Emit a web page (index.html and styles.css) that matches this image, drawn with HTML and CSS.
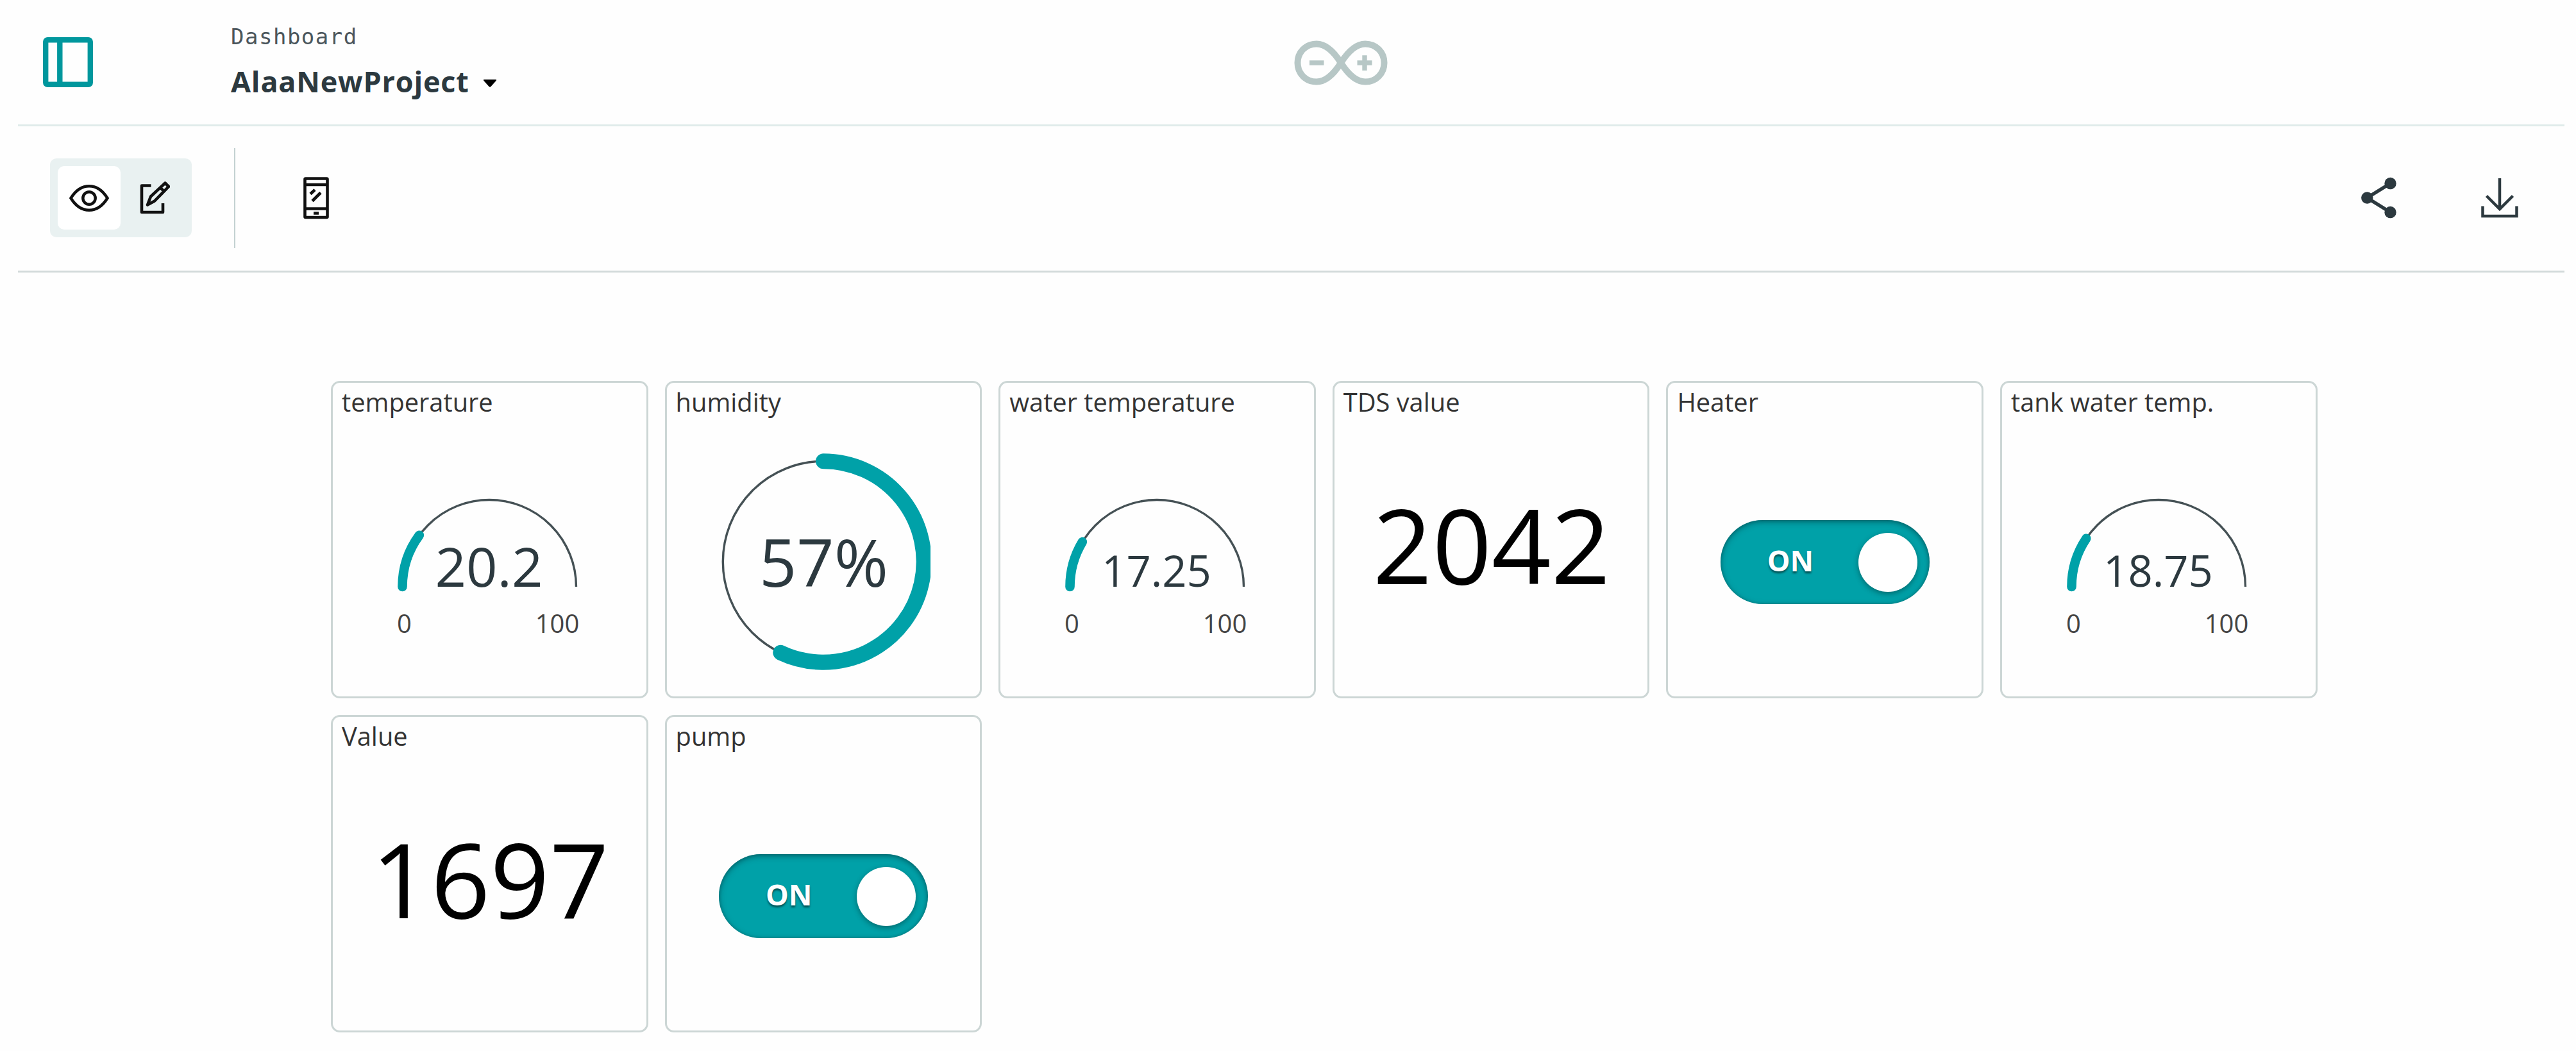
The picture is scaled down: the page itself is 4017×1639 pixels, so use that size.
FILE: index.html
```html
<!DOCTYPE html>
<html lang="en">
<head>
<meta charset="utf-8">
<title>AlaaNewProject - Dashboard</title>
<link rel="stylesheet" href="styles.css">
</head>
<body>
<div class="page">
  <header class="header">
    <svg class="sidebar-icon" viewBox="0 0 78 78"><rect x="4.2" y="4.2" width="69.6" height="69.6" rx="3"/><path d="M26.3 4V74"/></svg>
    <div class="heading">
      <div class="crumb">Dashboard</div>
      <div class="project"><h1 class="name">AlaaNewProject</h1><svg class="caret" viewBox="0 0 22 14"><path d="M2 1H20Q22 1 20.5 3L12.500 12Q11 13.500 9.500 12L1.500 3Q0 1 2 1Z"/></svg></div>
    </div>
    <svg class="logo" viewBox="0 0 148 72">
      <path d="M74 36C62 17 49 6.500 36 6.500C19 6.500 6.500 19.500 6.500 36S19 65.500 36 65.500C49 65.500 62 55 74 36C86 17 99 6.500 112 6.500C129 6.500 141.500 19.500 141.500 36S129 65.500 112 65.500C99 65.500 86 55 74 36Z"/>
      <path class="sign" d="M25 36H47.500M99.500 36H122.500M111 24.300V48"/>
    </svg>
  </header>

  <div class="toolbar">
    <div class="modes">
      <div class="mode active"><svg class="eye" viewBox="0 0 62 42"><path d="M2.500 21C18-4 44-4 59.500 21C44 46 18 46 2.500 21Z"/><circle cx="31" cy="21" r="9.700"/></svg></div>
      <div class="mode"><svg class="edit" viewBox="0 0 48 51"><path d="M18.500 6.500H4V48H37V34"/><path d="M13 36.500L18 23.500L40.500 2.500L46 8L24 30.500ZM33 9.500L39 15.500"/></svg></div>
    </div>
    <div class="divider"></div>
    <svg class="phone" viewBox="0 0 40 66"><rect x="2.500" y="2.500" width="35" height="60.500" rx="1"/><path d="M2.500 12H37.500M2.500 49.500H37.500M11 26.500L18 20M14 37.500L27 24.500M16 56.500H24"/></svg>
    <div class="actions">
      <svg class="share" viewBox="0 0 56 66"><path d="M45.500 10L9.300 32.500L45.500 55"/><circle cx="45.500" cy="10" r="9.200"/><circle cx="9.300" cy="32.500" r="9.200"/><circle cx="45.500" cy="55" r="9.200"/></svg>
      <svg class="download" viewBox="0 0 58 66"><path d="M29 2V50M8.500 29.500L29 50L49.500 29.500M2.500 45.500V61H55.500V45.500"/></svg>
    </div>
  </div>

  <main class="grid">
    <section class="card">
      <h2 class="title">temperature</h2>
      <svg class="gauge" viewBox="0 0 488 435">
        <path class="track" d="M108.500 264A135.500 135.500 0 0 1 379.500 264"/>
        <path class="fill" d="M108.500 264A135.500 135.500 0 0 1 134.900 183.700"/>
        <text class="reading" x="243.500" y="263.500">20.2</text>
        <text class="bound" x="111.500" y="336">0</text><text class="bound" x="350" y="336">100</text>
      </svg>
    </section>
    <section class="card">
      <h2 class="title">humidity</h2>
      <svg class="gauge percent" viewBox="0 0 488 435">
        <defs><clipPath id="ring-bounds"><rect x="77" y="0" width="334" height="435"/></clipPath></defs>
        <g clip-path="url(#ring-bounds)">
          <circle class="track" cx="244" cy="225" r="156.700"/>
          <path class="fill" d="M244 68.300A156.700 156.700 0 1 1 177.300 366.800"/>
        </g>
        <text class="reading" x="244.500" y="263.500">57%</text>
      </svg>
    </section>
    <section class="card">
      <h2 class="title">water temperature</h2>
      <svg class="gauge long" viewBox="0 0 488 435">
        <path class="track" d="M108.500 264A135.500 135.500 0 0 1 379.500 264"/>
        <path class="fill" d="M108.500 264A135.500 135.500 0 0 1 127.900 194.100"/>
        <text class="reading" x="243.500" y="263.500">17.25</text>
        <text class="bound" x="111.500" y="336">0</text><text class="bound" x="350" y="336">100</text>
      </svg>
    </section>
    <section class="card">
      <h2 class="title">TDS value</h2>
      <div class="value">2042</div>
    </section>
    <section class="card">
      <h2 class="title">Heater</h2>
      <div class="toggle"><span class="state">ON</span><span class="knob"></span></div>
    </section>
    <section class="card">
      <h2 class="title">tank water temp.</h2>
      <svg class="gauge long" viewBox="0 0 488 435">
        <path class="track" d="M108.500 264A135.500 135.500 0 0 1 379.500 264"/>
        <path class="fill" d="M108.500 264A135.500 135.500 0 0 1 131.300 188.700"/>
        <text class="reading" x="243.500" y="263.500">18.75</text>
        <text class="bound" x="111.500" y="336">0</text><text class="bound" x="350" y="336">100</text>
      </svg>
    </section>
    <section class="card">
      <h2 class="title">Value</h2>
      <div class="value">1697</div>
    </section>
    <section class="card">
      <h2 class="title">pump</h2>
      <div class="toggle"><span class="state">ON</span><span class="knob"></span></div>
    </section>
  </main>
</div>
</body>
</html>
```
FILE: styles.css
```css
* { box-sizing: border-box; }
body {
  margin: 0;
  background: #fefefe;
  color: #2c393f;
  font-family: "Open Sans", "Noto Sans", sans-serif;
}
svg { display: block; flex: none; fill: none; }
.page { padding: 0 18px 0 28px; }

/* header */
.header {
  display: flex;
  align-items: flex-start;
  height: 197px;
  border-bottom: 3px solid #e0ebea;
}
.sidebar-icon { width: 78px; height: 78px; margin: 58px 0 0 39px; stroke: #00979d; stroke-width: 8.4; }
.heading { width: 1600px; margin: 33px 0 0 215px; }
.crumb {
  font: 34px/48px "DejaVu Sans Mono", monospace;
  letter-spacing: 1.5px;
  color: #4b565c;
}
.project { display: flex; align-items: center; margin-top: 16px; }
.name { margin: 0; font-size: 45px; line-height: 60px; font-weight: 700; letter-spacing: .8px; }
.caret { width: 22px; height: 14px; margin: 5px 0 0 21px; fill: #000; }
.logo { width: 148px; height: 72px; margin: 62px 0 0 57px; stroke: #b7c7c6; stroke-width: 10; }
.logo .sign { stroke-width: 7.4; }

/* toolbar */
.toolbar {
  display: flex;
  align-items: center;
  height: 228px;
  padding: 0 72px 2px 50px;
  border-bottom: 3px solid #d2dada;
}
.modes {
  display: flex;
  gap: 11px;
  width: 221px;
  height: 123px;
  padding: 12px;
  border-radius: 10px;
  background: #e9f1f1;
}
.mode { display: flex; align-items: center; justify-content: center; width: 98px; border-radius: 10px; }
.mode.active { background: #fff; }
.mode:not(.active) { width: 84px; }
.eye { width: 62px; height: 42px; stroke: #111; stroke-width: 4.5; }
.edit { width: 48px; height: 51px; stroke: #111; stroke-width: 4.6; stroke-linejoin: round; }
.divider { width: 2px; height: 156px; margin-left: 66px; background: #c3d1d1; }
.phone { width: 40px; height: 66px; margin-left: 106px; stroke: #111; stroke-width: 4.6; }
.actions { display: flex; gap: 131px; margin-left: auto; stroke: #2c393f; }
.share { width: 56px; height: 66px; stroke-width: 5.500; }
.share circle { fill: #2c393f; stroke: none; }
.download { width: 58px; height: 66px; stroke-width: 4.500; }

/* widgets */
.grid {
  display: grid;
  grid-template-columns: repeat(6, 494.6px);
  grid-auto-rows: 495px;
  gap: 26px;
  margin: 169px 0 0 488px;
}
.card { display: flex; flex-direction: column; align-items: center; padding-top: 6px; border: 3px solid #ccd6d5; border-radius: 14px; }
.title {
  align-self: stretch;
  margin: 0;
  padding-left: 14px;
  font-size: 39.8px;
  line-height: 48px;
  font-weight: 400;
  color: #333;
}
.gauge { width: 488px; height: 435px; }
.track { stroke: #455155; stroke-width: 3.4; }
.fill { stroke: #00a1a8; stroke-width: 14.6; stroke-linecap: round; }
.percent .fill { stroke-width: 24; }
.reading { font-size: 85px; text-anchor: middle; fill: #2c393f; }
.long .reading { font-size: 67px; }
.percent .reading { font-size: 102px; }
.bound { font-size: 40px; text-anchor: middle; fill: #444; }
.value { margin: 97px 0 0 2px; font-size: 162px; line-height: 200px; color: #000; }
.toggle {
  display: flex;
  align-items: center;
  justify-content: space-between;
  width: 326px;
  height: 131px;
  margin-top: 160px;
  padding: 0 19px 0 73px;
  border-radius: 66px;
  background: #00a1a8;
  box-shadow: inset 0 3px 10px rgba(0, 50, 55, .5), inset 0 0 4px rgba(0, 60, 60, .3);
}
.state { padding-bottom: 5px; font-size: 45px; line-height: 60px; font-weight: 700; color: #fff; text-shadow: 0 3px 3px rgba(0, 40, 40, .65); }
.knob { width: 92px; height: 92px; border-radius: 50%; background: #fff; box-shadow: 0 3px 8px rgba(0, 40, 40, .45); }
```
